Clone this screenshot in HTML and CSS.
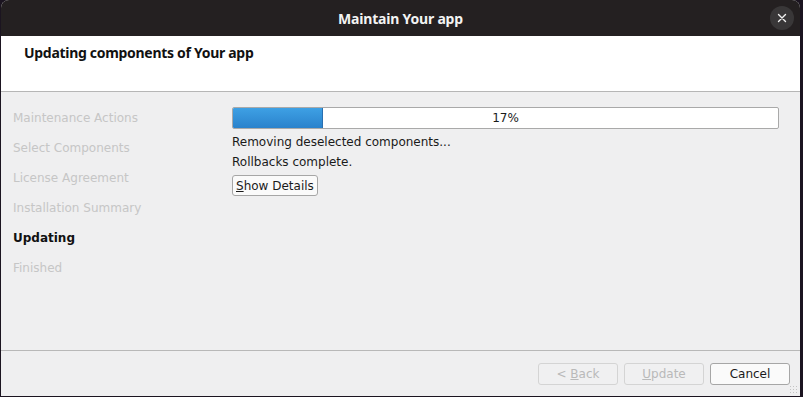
FILE: index.html
```html
<!DOCTYPE html>
<html lang="en">
<head>
  <meta charset="UTF-8">
  <title>Maintain Your app</title>
  <link rel="stylesheet" href="styles.css">
</head>
<body>

  <div class="window">
    <div class="titlebar">
      <span></span>
      <span class="title">Maintain Your app</span>
      <span class="close-wrap">
        <span class="close">
          <svg width="10" height="10" viewBox="0 0 10 10">
            <path d="M1.5 1.5 L8.5 8.5 M8.5 1.5 L1.5 8.5" stroke="#f2f2f2" stroke-width="1.4" stroke-linecap="round"/>
          </svg>
        </span>
      </span>
    </div>

    <div class="header">
      <h1>Updating components of Your app</h1>
    </div>

    <div class="main">
      <ul class="steps">
        <li>Maintenance Actions</li>
        <li>Select Components</li>
        <li>License Agreement</li>
        <li>Installation Summary</li>
        <li class="current">Updating</li>
        <li>Finished</li>
      </ul>

      <div class="content">
        <div class="progress">
          <div class="progress-fill" style="width: 16.5%"></div>
          <span class="progress-label">17%</span>
        </div>
        <p>Removing deselected components...</p>
        <p>Rollbacks complete.</p>
        <button class="btn details"><u>S</u>how Details</button>
      </div>
    </div>

    <div class="footer">
      <button class="btn" disabled>&lt; <u>B</u>ack</button>
      <button class="btn" disabled><u>U</u>pdate</button>
      <button class="btn">Cancel</button>
    </div>

    <span class="grip"></span>
  </div>

</body>
</html>
```

FILE: styles.css
```css
body {
  margin: 0;
  background-color: #1b1420;
  font-family: "DejaVu Sans", sans-serif;
  font-size: 12px;
  color: #1a1a1a;
  overflow: hidden;
}

.window {
  position: relative;
  width: 799px;
  height: 396px;
  margin-left: 1px;
  display: flex;
  flex-direction: column;
  background-color: #efeff0;
  border-radius: 8px 8px 0 0;
  overflow: hidden;
}

/* Title bar */
.titlebar {
  height: 36px;
  flex-shrink: 0;
  background-color: #242021;
  display: grid;
  grid-template-columns: 1fr auto 1fr;
  align-items: center;
}

.title {
  font-family: "Noto Sans", sans-serif;
  font-weight: bold;
  font-size: 14px;
  color: #f3f3f3;
  letter-spacing: -0.2px;
}

.close-wrap {
  display: flex;
  justify-content: flex-end;
  padding-right: 6px;
}

.close {
  width: 24px;
  height: 24px;
  border-radius: 50%;
  background-color: #393738;
  display: flex;
  align-items: center;
  justify-content: center;
}

/* Header */
.header {
  height: 55px;
  flex-shrink: 0;
  background-color: #fff;
  border-bottom: 1px solid #b6b6b6;
  padding: 0 23px;
}

.header h1 {
  margin: 8px 0 0;
  font-family: "Noto Sans", sans-serif;
  font-size: 14px;
  font-weight: bold;
  letter-spacing: -0.3px;
  line-height: 17px;
  color: #111;
}

/* Main */
.main {
  flex: 1;
  display: flex;
}

.steps {
  list-style: none;
  margin: 0;
  padding: 11px 0 0 12px;
  width: 219px;
}

.steps li {
  line-height: 30px;
  color: #c6c6c6;
}

.steps li.current {
  color: #111;
  font-weight: bold;
}

.content {
  flex: 1;
  padding: 15px 21px 0 0;
}

.progress {
  position: relative;
  height: 20px;
  border: 1px solid #a9a9a9;
  border-radius: 2px;
  background-color: #fff;
  overflow: hidden;
}

.progress-fill {
  height: 100%;
  background: linear-gradient(#3ea0e4, #2a82cc);
  border-right: 1px solid #2a6fb0;
  box-sizing: border-box;
}

.progress-label {
  position: absolute;
  left: 0;
  right: 0;
  top: 0;
  text-align: center;
  line-height: 20px;
}

.content p {
  margin: 0;
  line-height: 20px;
}

.content p:first-of-type {
  margin-top: 3px;
}

.btn {
  font-family: "DejaVu Sans", sans-serif;
  font-size: 12px;
  height: 22px;
  padding: 0 3px;
  border: 1px solid #a6a6a6;
  border-radius: 3px;
  background-color: #fafafa;
  color: #1a1a1a;
}

.btn:disabled {
  border-color: #d4d4d4;
  background-color: #f0f0f1;
  color: #b9b9b9;
}

.details {
  margin-top: 3px;
  height: 21px;
}

/* Footer */
.footer {
  height: 46px;
  flex-shrink: 0;
  border-top: 1px solid #b8b8b8;
  display: flex;
  justify-content: flex-end;
  align-items: flex-start;
  gap: 6px;
  padding: 12px 10px 0 0;
  box-sizing: border-box;
}

.footer .btn {
  width: 80px;
}

.grip {
  position: absolute;
  right: 2px;
  bottom: 2px;
  width: 9px;
  height: 9px;
  background-image: radial-gradient(#c4c4c4 0.7px, transparent 0.9px);
  background-size: 3px 3px;
}
```
